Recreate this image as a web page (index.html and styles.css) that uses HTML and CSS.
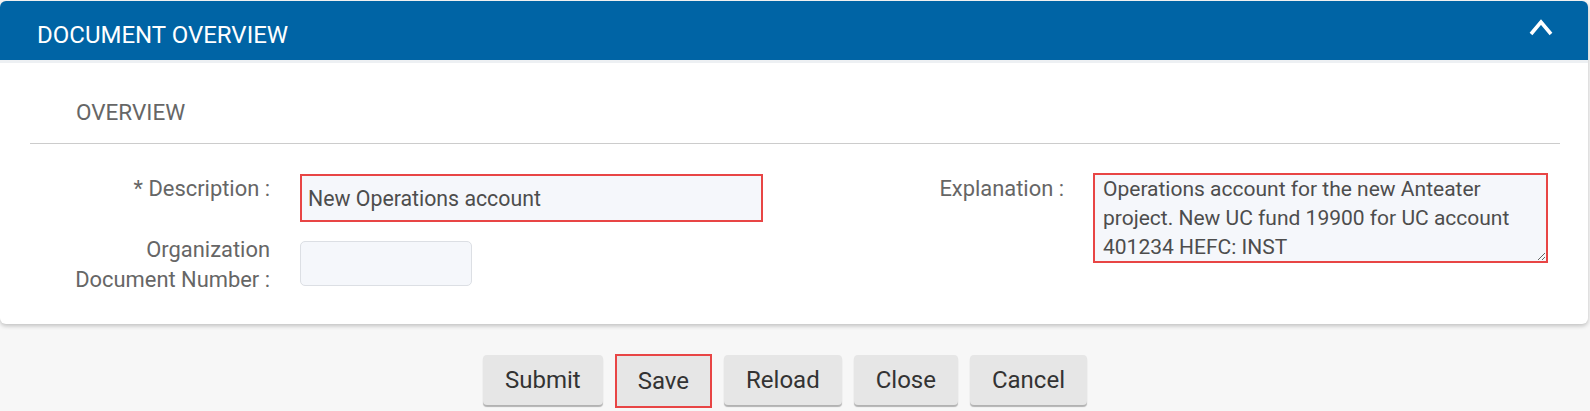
FILE: index.html
```html
<!DOCTYPE html>
<html lang="en">
<head>
<meta charset="utf-8">
<title>Document Overview</title>
<link rel="stylesheet" href="styles.css">
</head>
<body>
<div class="card">
  <div class="card-header">
    <h2 class="card-title">DOCUMENT OVERVIEW</h2>
    <svg class="chevron" width="24" height="18" viewBox="0 0 24 18" aria-hidden="true">
      <polyline points="2,15 12,3 22,15" fill="none" stroke="#ffffff" stroke-width="3.6" stroke-linecap="butt" stroke-linejoin="miter"/>
    </svg>
  </div>
  <div class="card-body">
    <div class="section-title">OVERVIEW</div>
    <div class="form">
      <div class="col col-left">
        <div class="field field-first">
          <label class="label">* Description :</label>
          <input class="input input-desc highlight" type="text" value="New Operations account">
        </div>
        <div class="field field-second">
          <label class="label label-two">Organization<br>Document Number :</label>
          <input class="input input-org" type="text" value="">
        </div>
      </div>
      <div class="col col-right">
        <div class="field field-first">
          <label class="label label-right">Explanation :</label>
          <textarea class="textarea highlight">Operations account for the new Anteater project. New UC fund 19900 for UC account 401234 HEFC: INST</textarea>
        </div>
      </div>
    </div>
  </div>
</div>
<div class="actions">
  <button class="btn">Submit</button>
  <button class="btn btn-marked">Save</button>
  <button class="btn">Reload</button>
  <button class="btn">Close</button>
  <button class="btn">Cancel</button>
</div>
</body>
</html>
```
FILE: styles.css
```css
* { box-sizing: border-box; }
html, body {
  margin: 0;
  padding: 0;
  background: #f7f7f7;
  font-family: Roboto, "Liberation Sans", Arial, sans-serif;
}
.card {
  width: 1588px;
  margin-top: 1px;
  background: #ffffff;
  border-radius: 6px;
  box-shadow: 0 2px 4px rgba(0, 0, 0, 0.22);
}
.card-header {
  height: 62px;
  display: flex;
  justify-content: space-between;
  align-items: flex-start;
  background: #0064a5;
  border-radius: 6px 6px 0 0;
  border-bottom: 3px solid #edf0f3;
  padding: 0 35px 0 37px;
}
.card-title {
  margin: 0;
  padding-top: 9px;
  font-size: 24px;
  line-height: 50px;
  font-weight: 400;
  color: #ffffff;
}
.chevron {
  display: block;
  margin-top: 18px;
}
.card-body {
  padding: 34px 28px 29px 30px;
}
.section-title {
  font-size: 22.5px;
  line-height: 30px;
  color: #666666;
  padding: 0 0 16px 46px;
  border-bottom: 1px solid #cccccc;
}
.form {
  display: flex;
  padding-top: 29px;
  padding-left: 30px;
}
.col {
  display: flex;
  flex-direction: column;
  gap: 13px;
}
.col-left { width: 703px; }
.col-right { margin-left: 91px; }
.field {
  display: flex;
  align-items: flex-start;
}
.label {
  width: 210px;
  flex: none;
  text-align: right;
  white-space: nowrap;
  font-size: 21.9px;
  line-height: 30px;
  padding-top: 1px;
  color: #666666;
  margin-right: 30px;
}
.label-two { padding-top: 0; }
.label-right { margin-right: 29px; }
.input {
  font-family: Roboto, "Liberation Sans", Arial, sans-serif;
  font-size: 21.3px;
  color: #4d4d4d;
  background: #f5f7fb;
  outline: none;
}
.input-desc {
  width: 463px;
  height: 48px;
  margin-top: 1px;
  padding: 0 6px;
  border: 2px solid #e84545;
  border-radius: 0;
}
.input-org {
  width: 172px;
  height: 45px;
  margin-top: 6px;
  padding: 0 8px;
  border: 1px solid #dcdfe4;
  border-radius: 5px;
}
.textarea {
  width: 455px;
  height: 90px;
  margin-top: 0;
  padding: 0 8px;
  font-family: Roboto, "Liberation Sans", Arial, sans-serif;
  font-size: 21px;
  line-height: 29px;
  color: #4d4d4d;
  background: #f5f7fb;
  border: 2px solid #e84545;
  border-radius: 0;
  outline: none;
  resize: vertical;
  overflow: hidden;
}
.actions {
  display: flex;
  justify-content: center;
  gap: 12px;
  padding: 31px 20px 0 0;
}
.btn {
  height: 50px;
  padding: 0 22px;
  font-family: Roboto, "Liberation Sans", Arial, sans-serif;
  font-size: 24px;
  line-height: 50px;
  color: #333333;
  background: #e6e6e6;
  border: none;
  border-radius: 4px;
  box-shadow: 0 2px 1px rgba(0, 0, 0, 0.28);
}
.btn-marked {
  border: 2px solid #e84545;
  border-radius: 0;
  line-height: 46px;
  padding: 0 21px;
  height: 54px;
  margin-top: -1px;
  box-shadow: none;
}
```
